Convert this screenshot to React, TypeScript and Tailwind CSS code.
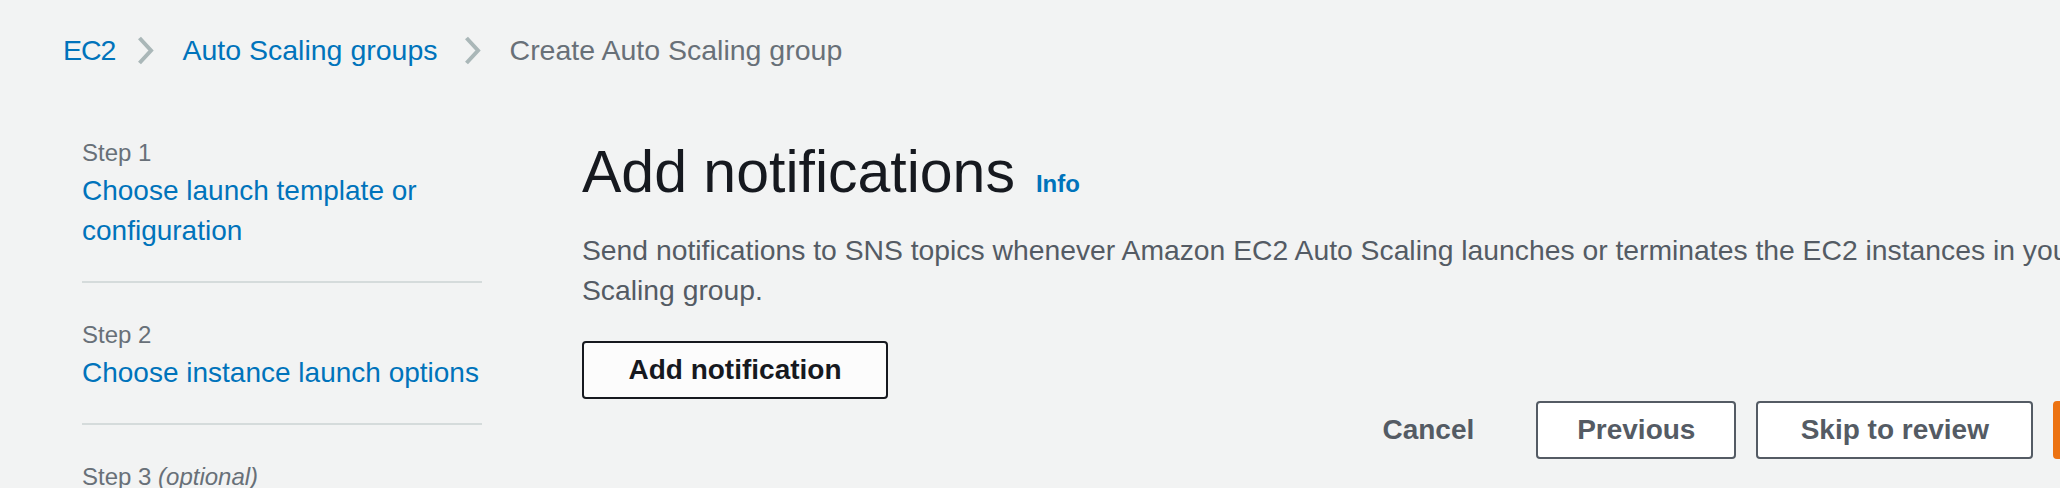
import React from "react";

const Chevron = ({ className }: { className?: string }) => (
  <svg width="17" height="29" viewBox="0 0 17 29" className={`shrink-0 ${className ?? ""}`}>
    <polyline points="2.5,2 14,14.5 2.5,27" fill="none" stroke="#aab7b8" strokeWidth="4" />
  </svg>
);

const NavItem = ({
  step,
  optional,
  label,
  first,
  last,
}: {
  step: string;
  optional?: boolean;
  label: string;
  first?: boolean;
  last?: boolean;
}) => (
  <div
    className={`${first ? "" : "pt-[34px]"} ${last ? "" : "pb-[30px] border-b-2 border-[#d5dbdb]"}`}
  >
    <div className="text-[24px] leading-[36px] text-[#687078]">
      {step}
      {optional && <span className="italic"> (optional)</span>}
    </div>
    <div className="text-[28px] leading-[40px] text-[#0073bb]">{label}</div>
  </div>
);

export default function App() {
  return (
    <div
      className="w-[2060px] h-[488px] overflow-hidden bg-[#f2f3f3]"
      style={{ fontFamily: '"Liberation Sans", Arial, sans-serif' }}
    >
      <nav className="flex items-center pl-[63px] pt-[30px] h-[70px] text-[28.5px] leading-[40px] whitespace-nowrap">
        <span className="text-[#0073bb] tracking-[-1px]">EC2</span>
        <Chevron className="ml-[22px]" />
        <span className="ml-[28px] text-[#0073bb]">Auto Scaling groups</span>
        <Chevron className="ml-[26px]" />
        <span className="ml-[29px] text-[#687078]">Create Auto Scaling group</span>
      </nav>
      <div className="flex items-start">
        <div className="ml-[82px] w-[400px] shrink-0 pt-[65px]">
          <NavItem first step="Step 1" label="Choose launch template or configuration" />
          <NavItem step="Step 2" label="Choose instance launch options" />
          <NavItem last step="Step 3" optional label="Configure advanced options" />
        </div>
        <div className="ml-[100px] w-[1616px] shrink-0 pt-[70px]">
          <div className="flex items-baseline">
            <h1 className="text-[59px] leading-[64px] text-[#16191f] font-normal">Add notifications</h1>
            <span className="ml-[21px] text-[24px] font-bold text-[#0073bb]">Info</span>
          </div>
          <p className="mt-[26px] text-[28.3px] leading-[40px] text-[#545b64]">
            Send notifications to SNS topics whenever Amazon EC2 Auto Scaling launches or terminates the EC2
            instances in your Auto Scaling group.
          </p>
          <button className="mt-[31px] h-[58px] w-[306px] rounded-[4px] border-2 border-[#16191f] bg-[#fcfcfc] text-[28px] leading-[40px] font-bold text-[#16191f]">
            Add notification
          </button>
          <div className="mt-[2px] flex justify-end gap-[20px]">
            <button className="h-[58px] px-[40px] border-2 border-transparent text-[28px] leading-[40px] font-bold text-[#545b64]">
              Cancel
            </button>
            <button className="h-[58px] w-[200px] rounded-[4px] border-2 border-[#545b64] bg-white text-[28px] leading-[40px] font-bold text-[#545b64]">
              Previous
            </button>
            <button className="h-[58px] w-[277px] rounded-[4px] border-2 border-[#545b64] bg-white text-[28px] leading-[40px] font-bold text-[#545b64]">
              Skip to review
            </button>
            <button className="h-[58px] px-[40px] rounded-[4px] border-2 border-[#ec7211] bg-[#ec7211] text-[28px] leading-[40px] font-bold text-white">
              Next
            </button>
          </div>
        </div>
      </div>
    </div>
  );
}
